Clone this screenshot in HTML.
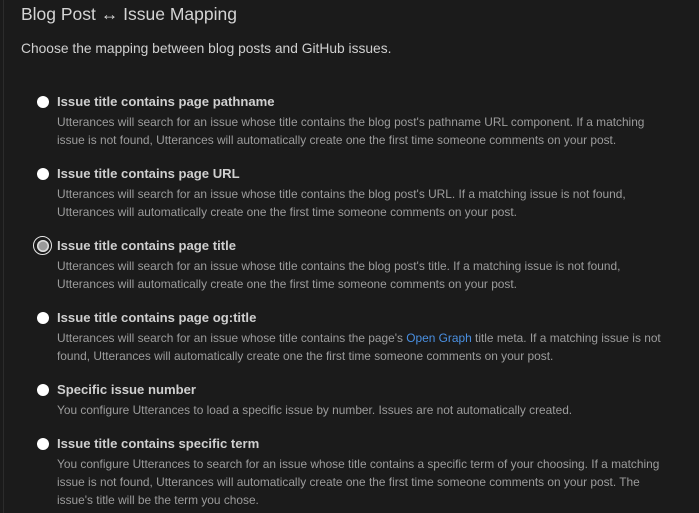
<!DOCTYPE html>
<html><head><style>
html,body{margin:0;padding:0;background:#1b1b1b;width:699px;height:513px;overflow:hidden}
body{font-family:"Liberation Sans",sans-serif;position:relative}
.bar{position:absolute;left:3px;top:0;width:1px;height:513px;background:#2c2c2c}
h2{position:absolute;left:21px;top:4px;margin:0;font-size:17.5px;font-weight:normal;color:#d4d4d4;white-space:nowrap}
.intro{position:absolute;left:21px;top:41px;font-size:13.8px;color:#d0d0d0;white-space:nowrap}
.opt{position:absolute;left:57px;white-space:nowrap}
.t{font-size:13.1px;font-weight:bold;color:#cfcfcf;line-height:18px}
.d{font-size:11.9px;color:#9c9c9c;line-height:18px;margin-top:2px}
.d a{color:#4a90e2;text-decoration:none}
.r{position:absolute;left:-20px;top:3px;width:12px;height:12px;border-radius:50%;background:#fff}
.r.sel{left:-24px;top:-1px;width:17px;height:17px;background:#1b1b1b;border:1.5px solid #e8e8e8;border-radius:50%}
.r.sel::after{content:"";position:absolute;left:2.5px;top:2.5px;width:12px;height:12px;border-radius:50%;background:#9a9a9a;box-shadow:0 0 0 1.5px #ddd inset}
</style></head><body>
<div class="bar"></div>
<h2>Blog Post ↔ Issue Mapping</h2>
<div class="intro">Choose the mapping between blog posts and GitHub issues.</div>

<div class="opt" style="top:93px"><span class="r"></span><div class="t">Issue title contains page pathname</div>
<div class="d">Utterances will search for an issue whose title contains the blog post's pathname URL component. If a matching<br>issue is not found, Utterances will automatically create one the first time someone comments on your post.</div></div>

<div class="opt" style="top:165px"><span class="r"></span><div class="t">Issue title contains page URL</div>
<div class="d">Utterances will search for an issue whose title contains the blog post's URL. If a matching issue is not found,<br>Utterances will automatically create one the first time someone comments on your post.</div></div>

<div class="opt" style="top:237px"><span class="r sel"></span><div class="t">Issue title contains page title</div>
<div class="d">Utterances will search for an issue whose title contains the blog post's title. If a matching issue is not found,<br>Utterances will automatically create one the first time someone comments on your post.</div></div>

<div class="opt" style="top:309px"><span class="r"></span><div class="t">Issue title contains page og:title</div>
<div class="d">Utterances will search for an issue whose title contains the page's <a>Open Graph</a> title meta. If a matching issue is not<br>found, Utterances will automatically create one the first time someone comments on your post.</div></div>

<div class="opt" style="top:381px"><span class="r"></span><div class="t">Specific issue number</div>
<div class="d">You configure Utterances to load a specific issue by number. Issues are not automatically created.</div></div>

<div class="opt" style="top:435px"><span class="r"></span><div class="t">Issue title contains specific term</div>
<div class="d">You configure Utterances to search for an issue whose title contains a specific term of your choosing. If a matching<br>issue is not found, Utterances will automatically create one the first time someone comments on your post. The<br>issue's title will be the term you chose.</div></div>
</body></html>
